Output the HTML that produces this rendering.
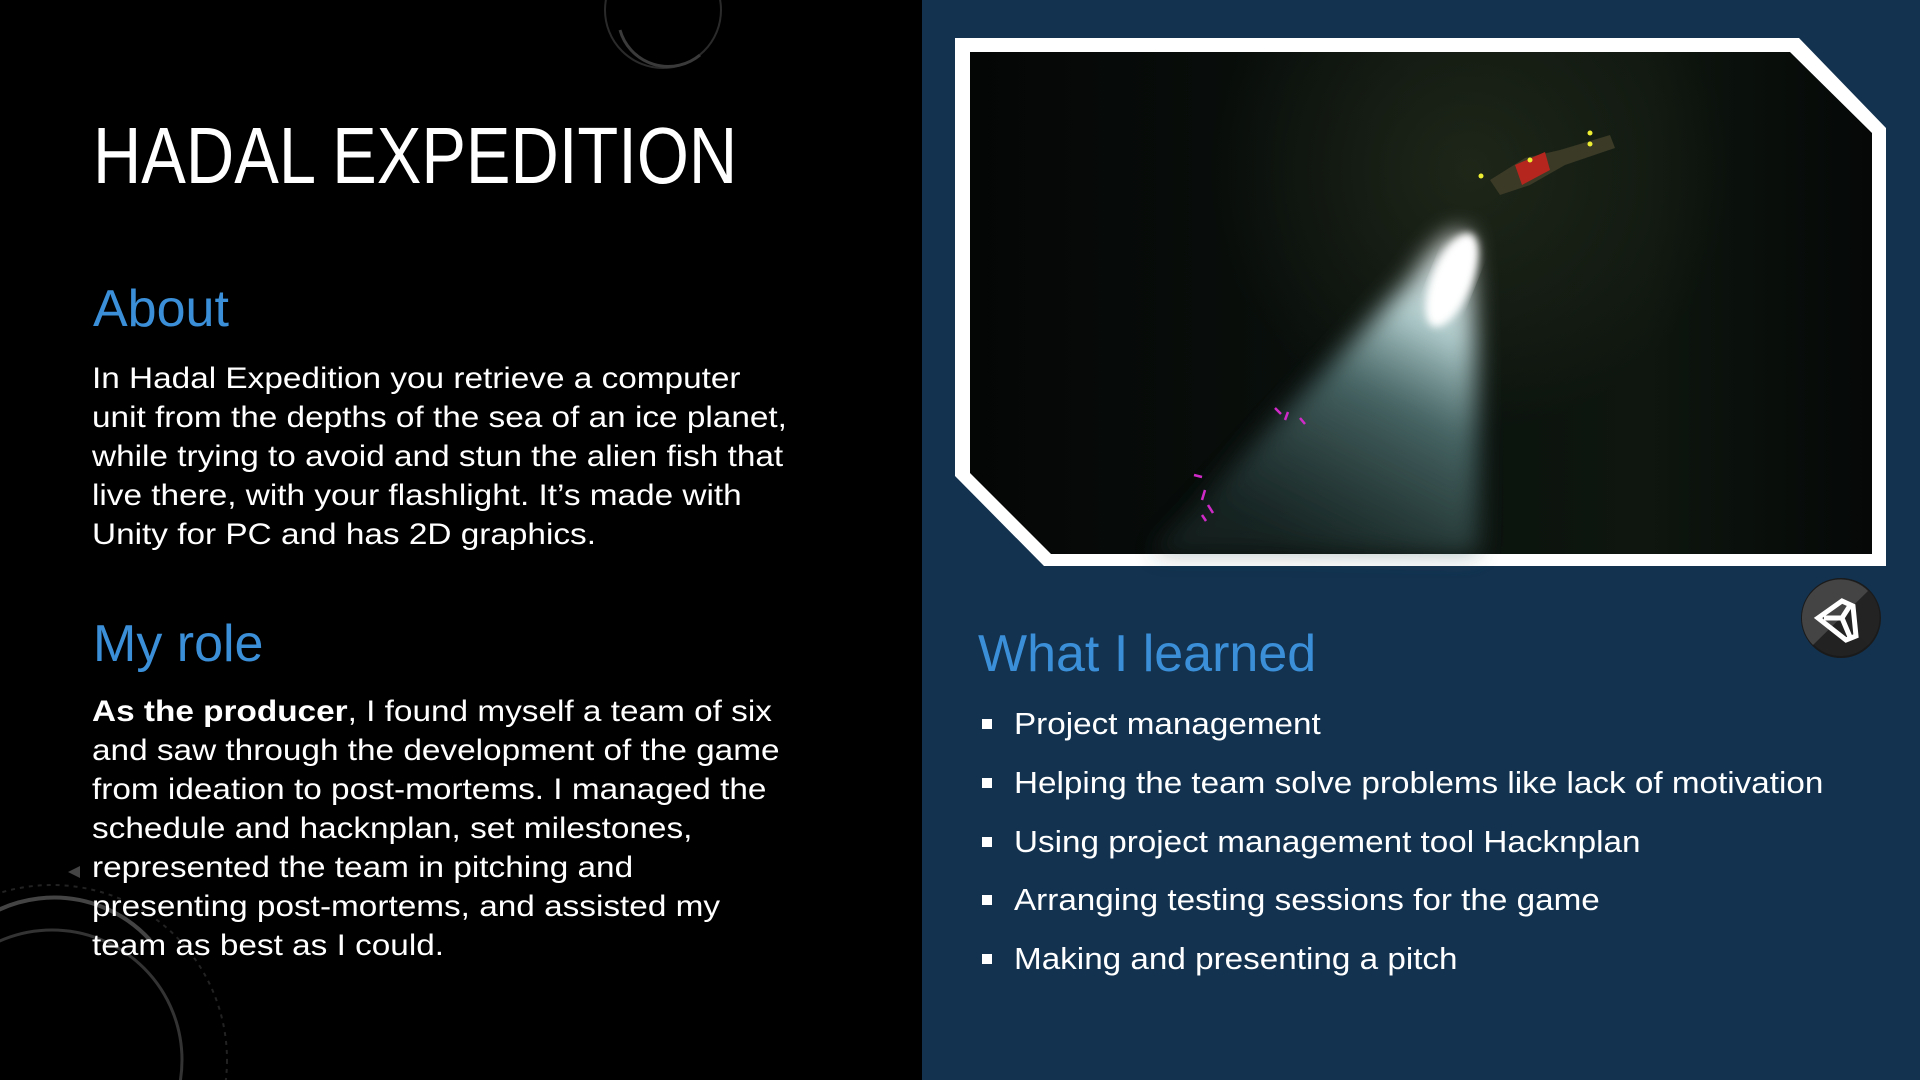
<!DOCTYPE html>
<html><head><meta charset="utf-8"><style>
html,body{margin:0;padding:0;width:1920px;height:1080px;overflow:hidden}
body{position:relative;background:#12324f;font-family:"Liberation Sans",sans-serif}
#left{position:absolute;left:0;top:0;width:922px;height:1080px;background:#000}
h1{position:absolute;margin:0;left:93px;top:116px;font-weight:normal;font-size:80px;color:#fff;transform:scaleX(.836);transform-origin:left;white-space:nowrap;line-height:1}
.h{position:absolute;margin:0;font-weight:normal;font-size:52px;color:#3b8fd8;line-height:1;white-space:nowrap}
.p{position:absolute;left:92px;font-size:29.5px;line-height:39px;color:#fff;white-space:nowrap;transform:scaleX(1.13);transform-origin:left}
ul{position:absolute;left:978px;top:706px;margin:0;padding:0;list-style:none;font-size:30.5px;color:#fff}
li{height:58.8px;position:relative;padding-left:36px;white-space:nowrap;line-height:36px}
li span{display:inline-block;transform:scaleX(1.09);transform-origin:left}
li:before{content:"";position:absolute;left:4px;top:13px;width:10px;height:10px;background:#fff}
</style></head><body>
<div id="left"></div>
<svg style="position:absolute;left:0;top:0" width="922" height="1080">
<circle cx="663" cy="10" r="58" fill="none" stroke="#2a2a2a" stroke-width="2"/>
<path d="M620 30 A50 50 0 0 0 700 55" fill="none" stroke="#3a3a3a" stroke-width="3"/>
<circle cx="52" cy="1060" r="130" fill="none" stroke="#333" stroke-width="3"/>
<circle cx="52" cy="1060" r="175" fill="none" stroke="#222" stroke-width="2" stroke-dasharray="4 5"/>
<path d="M-60 965 A130 130 0 0 1 150 940" fill="none" stroke="#444" stroke-width="4"/>
<path d="M68 872 l12 -6 v12z" fill="#444"/>
</svg>
<h1>HADAL EXPEDITION</h1>
<div class="h" style="left:93px;top:283px">About</div>
<div class="p" style="top:359px">In Hadal Expedition you retrieve a computer<br>unit from the depths of the sea of an ice planet,<br>while trying to avoid and stun the alien fish that<br>live there, with your flashlight. It’s made with<br>Unity for PC and has 2D graphics.</div>
<div class="h" style="left:93px;top:618px">My role</div>
<div class="p" style="top:692px"><b>As the producer</b>, I found myself a team of six<br>and saw through the development of the game<br>from ideation to post-mortems. I managed the<br>schedule and hacknplan, set milestones,<br>represented the team in pitching and<br>presenting post-mortems, and assisted my<br>team as best as I could.</div>

<svg style="position:absolute;left:0;top:0" width="1920" height="1080">
<defs>
<linearGradient id="bg" x1="0" y1="0" x2="1" y2="0">
<stop offset="0" stop-color="#040605"/><stop offset=".5" stop-color="#0b120e"/><stop offset=".75" stop-color="#0e160f"/><stop offset="1" stop-color="#050807"/></linearGradient>
<radialGradient id="glow" cx="1470" cy="170" r="260" gradientUnits="userSpaceOnUse"><stop offset="0" stop-color="#2a3320" stop-opacity=".6"/><stop offset="1" stop-color="#2a3320" stop-opacity="0"/></radialGradient>
<linearGradient id="cone" x1="1460" y1="240" x2="1300" y2="554" gradientUnits="userSpaceOnUse">
<stop offset="0" stop-color="#ffffff"/><stop offset=".25" stop-color="#cfeef0"/><stop offset=".5" stop-color="#6f9c9e" stop-opacity=".7"/><stop offset="1" stop-color="#2d4a4a" stop-opacity=".4"/></linearGradient>
<filter id="bl"><feGaussianBlur stdDeviation="12"/></filter>
<filter id="bl2"><feGaussianBlur stdDeviation="4"/></filter>
</defs>
<polygon points="955,38 1799,38 1886,128 1886,566 1044,566 955,476" fill="#fff"/>
<polygon points="970,52 1790,52 1872,133 1872,554 1051,554 970,473" fill="url(#bg)"/>
<polygon points="970,52 1790,52 1872,133 1872,554 1051,554 970,473" fill="url(#glow)"/>
<path d="M1410 280 Q1445 225 1468 232 Q1478 300 1478 554 L1150 554 Z" fill="url(#cone)" filter="url(#bl)" opacity=".85"/>
<ellipse cx="1452" cy="280" rx="20" ry="50" transform="rotate(22 1452 280)" fill="#fff" filter="url(#bl2)"/>
<path d="M1490 180 L1525 158 L1560 150 L1610 135 L1615 148 L1565 165 L1530 185 L1500 195Z" fill="#3a3a26"/>
<path d="M1515 165 L1545 152 L1550 170 L1522 185Z" fill="#b5261e"/>
<circle cx="1481" cy="176" r="2.5" fill="#ee3"/><circle cx="1530" cy="160" r="2.5" fill="#ee3"/><circle cx="1590" cy="133" r="2.5" fill="#ee3"/><circle cx="1590" cy="144" r="2.5" fill="#ee3"/>
<g stroke="#d02bc8" stroke-width="2.5"><path d="M1275 408l6 6M1288 412l-3 8M1300 418l5 6M1194 475l8 2M1205 490l-3 10M1208 505l5 8M1202 515l4 6"/></g>
<circle cx="1841" cy="618" r="39" fill="#222" stroke="#1a1a1a" stroke-width="2"/>
<path d="M1814 590 A38 38 0 0 1 1868 645 Z" fill="#232323"/>
<path d="M1813 645 A38 38 0 0 1 1868 591 Z" fill="#444"/>
<g fill="none" stroke="#fff" stroke-width="5" stroke-linejoin="miter">
<path d="M1818 618 L1842 601 L1853 606 L1856 636 L1846 640 Z"/>
<path d="M1824 618 L1842 618 L1851 604 M1842 618 L1850 637"/>
</g>
</svg>
<div class="h" style="left:978px;top:628px">What I learned</div>
<ul>
<li><span>Project management</span></li>
<li><span>Helping the team solve problems like lack of motivation</span></li>
<li><span>Using project management tool Hacknplan</span></li>
<li><span>Arranging testing sessions for the game</span></li>
<li><span>Making and presenting a pitch</span></li>
</ul>
</body></html>
